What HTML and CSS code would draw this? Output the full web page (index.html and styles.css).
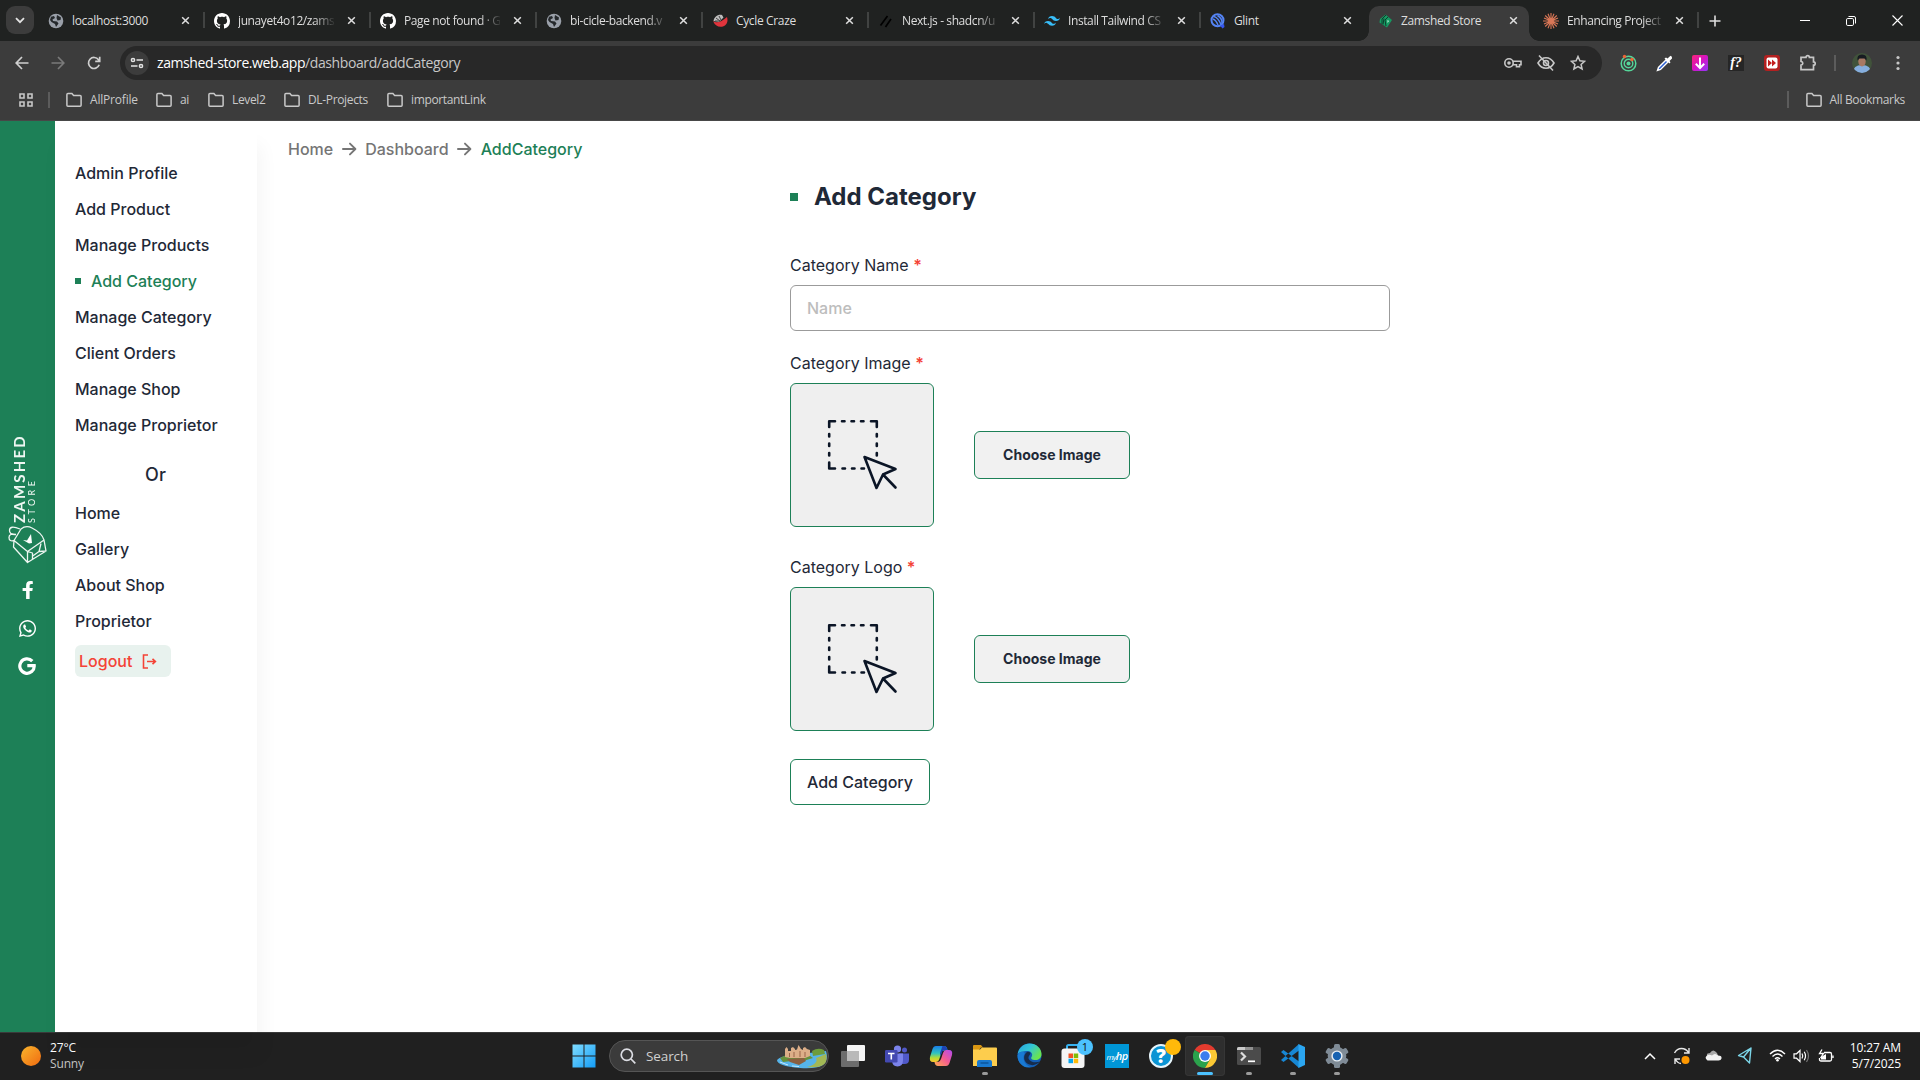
FILE: index.html
```html
<!DOCTYPE html>
<html lang="en">
<head>
<meta charset="utf-8">
<title>Zamshed Store</title>
<link rel="stylesheet" href="styles.css">
</head>
<body>
<svg class="defs" width="0" height="0" aria-hidden="true">
  <defs>
    <symbol id="x" viewBox="0 0 10 10"><path d="M1.3 1.3l7.4 7.4M8.7 1.3L1.3 8.7" stroke="currentColor" stroke-width="1.7" fill="none"/></symbol>
    <symbol id="folder" viewBox="0 0 16 16"><path d="M.9 2.6q0-1 1-1h4l1.7 2h6.5q1 0 1 1v8.600q0 1-1 1H1.900q-1 0-1-1z" fill="none" stroke="currentColor" stroke-width="1.500"/></symbol>
    <symbol id="globe" viewBox="0 0 16 16"><circle cx="8" cy="8" r="7.300" fill="#9aa0a9"/><path d="M3 3.800l3-.8 1 2-2.500 1.500L5 8l4 .5 1.500 2L8 14l-1-3-3.500-2L2 7zM9 2l4 2.500-.5 2.500-3 .5L8.500 5z" fill="#24282b"/></symbol>
    <symbol id="github" viewBox="0 0 16 16"><path fill="#fff" d="M8 0C3.580 0 0 3.580 0 8c0 3.540 2.290 6.530 5.470 7.590.4.070.55-.17.55-.38 0-.19-.01-.82-.01-1.490-2.010.37-2.530-.49-2.690-.94-.09-.23-.48-.94-.82-1.130-.28-.15-.68-.52-.01-.53.63-.01 1.080.58 1.230.82.72 1.210 1.870.87 2.330.66.07-.52.28-.87.51-1.070-1.780-.2-3.640-.89-3.640-3.950 0-.87.31-1.590.82-2.150-.08-.2-.36-1.020.08-2.120 0 0 .67-.21 2.200.82.64-.18 1.320-.27 2-.27s1.360.09 2 .27c1.530-1.040 2.200-.82 2.200-.82.44 1.100.16 1.920.08 2.120.51.56.82 1.270.82 2.150 0 3.070-1.870 3.750-3.650 3.950.29.25.54.73.54 1.480 0 1.070-.01 1.930-.01 2.200 0 .21.15.46.55.38A8.010 8.010 0 0016 8c0-4.420-3.580-8-8-8z"/></symbol>
    <symbol id="arrow" viewBox="0 0 16 14"><path d="M1 7h13M8.500 1.200L14.300 7l-5.800 5.800" fill="none" stroke="currentColor" stroke-width="2" stroke-linecap="round" stroke-linejoin="round"/></symbol>
    <symbol id="select" viewBox="0 0 72 72">
      <g fill="none" stroke="#0b1526" stroke-width="2.600" stroke-linecap="round" stroke-linejoin="round">
        <path d="M8 2.200H2.200V8M44 2.200h5.800V8M2.200 43.500v6H8"/>
        <path d="M15 2.200h2.500M24.500 2.200H27M34 2.200h2.500M2.200 15v2.500M2.200 24.500V27M2.200 34v2.500M49.800 15v2.500M49.800 24.500V27M49.800 34v2.500M15.500 49.500H18M25 49.500h2.500M34.500 49.500H37"/>
        <path d="M37.500 38L68.500 50l-12.500 5.500L49.500 69zM56 55.500L68.500 68.500"/>
      </g>
    </symbol>
  </defs>
</svg>

<header class="browser">
  <div class="tabstrip">
    <button class="tab-search"><svg width="10" height="7" viewBox="0 0 10 7"><path d="M1 1.200l4 4 4-4" fill="none" stroke="#e3e3e3" stroke-width="1.800"/></svg></button>
    <div class="tab"><svg class="fav"><use href="#globe"/></svg><span class="title">localhost:3000</span><svg class="close"><use href="#x"/></svg></div>
    <div class="tab"><svg class="fav"><use href="#github"/></svg><span class="title fade">junayet4o12/zams</span><svg class="close"><use href="#x"/></svg></div>
    <div class="tab"><svg class="fav"><use href="#github"/></svg><span class="title fade">Page not found · G</span><svg class="close"><use href="#x"/></svg></div>
    <div class="tab"><svg class="fav"><use href="#globe"/></svg><span class="title fade">bi-cicle-backend.v</span><svg class="close"><use href="#x"/></svg></div>
    <div class="tab"><svg class="fav" viewBox="0 0 16 16"><path d="M1 8q5 4 14-4 2 7-4 9.500Q4 15 1 8z" fill="#e0343c"/><path d="M1.500 8C2 4 6 1 10 2l1.500 2.500L7 9z" fill="#bdbdbd"/><path d="M4 5l4 3M7 3l2 4M3 8l5 0" stroke="#444"/></svg><span class="title">Cycle Craze</span><svg class="close"><use href="#x"/></svg></div>
    <div class="tab"><svg class="fav" viewBox="0 0 16 16"><path d="M2.500 12.500l7-9.500M7.500 14L13 6" stroke="#000" stroke-width="1.700"/></svg><span class="title fade">Next.js - shadcn/u</span><svg class="close"><use href="#x"/></svg></div>
    <div class="tab"><svg class="fav" viewBox="0 0 54 33"><path fill="#38bdf8" d="M27 0c-7.200 0-11.700 3.600-13.500 10.800 2.700-3.600 5.850-4.950 9.450-4.050 2.054.514 3.522 2.004 5.147 3.653C30.744 13.090 33.808 16.200 40.500 16.200c7.200 0 11.700-3.600 13.500-10.800-2.700 3.600-5.850 4.950-9.450 4.050-2.054-.514-3.522-2.004-5.147-3.653C36.756 3.110 33.692 0 27 0zM13.500 16.200C6.300 16.200 1.800 19.800 0 27c2.700-3.600 5.850-4.950 9.450-4.050 2.054.514 3.522 2.004 5.147 3.653C17.244 29.290 20.308 32.400 27 32.400c7.200 0 11.700-3.600 13.500-10.800-2.700 3.600-5.850 4.950-9.450 4.050-2.054-.514-3.522-2.004-5.147-3.653C23.256 19.310 20.192 16.200 13.500 16.200z"/></svg><span class="title fade">Install Tailwind CS</span><svg class="close"><use href="#x"/></svg></div>
    <div class="tab no-sep"><svg class="fav" viewBox="0 0 16 16"><circle cx="7.500" cy="7.300" r="6" fill="none" stroke="#5484f5" stroke-width="2"/><path d="M4 3.500q4 1 7 8M7.500 2.500q5 3 4.500 8M3 6q3 1 5 6" stroke="#5484f5" stroke-width="1.500" fill="none"/><path d="M10 12.500l4-1.500.5 3-2 1.500z" fill="#3656ee"/></svg><span class="title">Glint</span><svg class="close"><use href="#x"/></svg></div>
    <div class="tab active"><svg class="fav" viewBox="0 0 16 16"><path d="M7.500 1.500L14 7l-5 7.500L1.500 9.500 2 6z" fill="#169a62"/><path d="M8 2L4 6v5M6 5.500l-1 6M10 4L7 7l1 6" stroke="#0c3d2c" fill="none"/><path d="M9.500 7l1.500 1L9.500 10z" fill="#d5fbe8"/></svg><span class="title">Zamshed Store</span><svg class="close"><use href="#x"/></svg></div>
    <div class="tab"><svg class="fav" viewBox="0 0 16 16"><path d="M8 0v16M0 8h16M2.200 2.500l11.600 11M13.800 2.500l-11.600 11M5 .8l6 14.400M11 .8L5 15.200M1 5l14 6M15 5L1 11" stroke="#d97757" stroke-width="1.100"/></svg><span class="title fade">Enhancing Project</span><svg class="close"><use href="#x"/></svg></div>
    <button class="new-tab"><svg width="12" height="12" viewBox="0 0 12 12"><path d="M6 .5v11M.5 6h11" stroke="#dedede" stroke-width="1.600"/></svg></button>
    <div class="window-controls">
      <svg width="10" height="10"><path d="M0 4.500h10" stroke="#fff"/></svg>
      <svg width="10" height="10" viewBox="0 0 10 10" fill="none" stroke="#fff"><rect x=".5" y="2.500" width="7" height="7" rx="1.300"/><path d="M2.500.5H8q1.500 0 1.500 1.500v5.500"/></svg>
      <svg width="11" height="11"><path d="M.5.5l10 10M10.500.5l-10 10" stroke="#fff" stroke-width="1.100"/></svg>
    </div>
  </div>

  <div class="toolbar">
    <div class="nav">
      <svg width="14" height="14" viewBox="0 0 14 14" fill="none" stroke="#d0d0d0" stroke-width="1.700"><path d="M13.500 7H1.500M7 1L1.200 7 7 13"/></svg>
      <svg width="14" height="14" viewBox="0 0 14 14" fill="none" stroke="#7a7a7a" stroke-width="1.700"><path d="M.5 7h12M7 1l5.800 6L7 13"/></svg>
      <svg width="14" height="14" viewBox="0 0 14 14" fill="none" stroke="#d0d0d0" stroke-width="1.700"><path d="M12.200 8.800A5.500 5.500 0 1 1 11.500 3.800L12.500 5.200M12.700.8v4.600H8.200"/></svg>
    </div>
    <div class="omnibox">
      <span class="site-info"><svg width="14" height="12" viewBox="0 0 14 12" fill="none" stroke="#e3e3e3" stroke-width="1.500"><circle cx="3" cy="3" r="1.600"/><path d="M6.500 3H13M1 9h6.500"/><circle cx="11" cy="9" r="1.600"/></svg></span>
      <span class="url"><b>zamshed-store.web.app</b>/dashboard/addCategory</span>
      <div class="omni-actions">
        <svg width="18" height="12" viewBox="0 0 18 12" fill="none" stroke="#c7c7c7" stroke-width="1.600"><circle cx="5" cy="6" r="4.200"/><circle cx="5" cy="6" r="1" fill="#c7c7c7"/><path d="M9 4.300h8v3.400h-1.500v2h-3v-2H9"/></svg>
        <svg width="18" height="18" viewBox="0 0 18 18" fill="none" stroke="#c7c7c7" stroke-width="1.600"><path d="M1 9q3-5.300 8-5.300T17 9q-3 5.300-8 5.300T1 9z"/><circle cx="9" cy="9" r="2.500"/><path d="M2 1.500l14 15"/></svg>
        <svg width="16" height="16" viewBox="0 0 16 16" fill="none" stroke="#c7c7c7" stroke-width="1.500"><path d="M8 1.500l1.900 4.300 4.700.5-3.500 3.100 1 4.600L8 11.600 3.900 14l1-4.600L1.400 6.300l4.700-.5z"/></svg>
      </div>
    </div>
    <div class="extensions">
      <svg width="17" height="18" viewBox="0 0 17 18"><circle cx="8.500" cy="9.500" r="7.300" fill="none" stroke="#55d69a" stroke-width="1.500"/><circle cx="8.500" cy="9.500" r="4.300" fill="none" stroke="#55d69a" stroke-width="1.400"/><circle cx="8.500" cy="9.500" r="2" fill="#55d69a"/><circle cx="4.500" cy="2.500" r="1.700" fill="#ee6336"/><circle cx="12" cy="5.500" r="1.700" fill="#ee6336"/></svg>
      <svg width="17" height="17" viewBox="0 0 17 17"><path d="M10 5L2.500 12.500 1.500 15.500l3-1L12 7z" fill="#2c5fd0" stroke="#fff" stroke-width="1.400"/><path d="M8.500 3.500l5 5 1-1.200-1-1.300 2.500-2.500Q16.500 1.500 14.500.8L11.500 3.500l-1.500-1z" fill="#fff"/></svg>
      <svg width="16" height="16" viewBox="0 0 16 16"><defs><linearGradient id="pk" x1="0" y1="0" x2="1" y2="1"><stop stop-color="#fb2478"/><stop offset=".5" stop-color="#d315c4"/><stop offset="1" stop-color="#9038fb"/></linearGradient></defs><rect width="16" height="16" rx="2" fill="url(#pk)"/><path d="M8 2.500v10.500M3.800 8.800L8 13l4.200-4.200" stroke="#fff" stroke-width="2" fill="none"/></svg>
      <span class="ext-font">f?</span>
      <svg width="16" height="16" viewBox="0 0 16 16"><rect width="16" height="16" rx="3" fill="#b32020"/><rect x="2.500" y="2.500" width="11" height="11" rx="2" fill="#fff"/><path d="M4 4.500L8 8l-4 3.500zM8 4.500L12 8l-4 3.500z" fill="#c41d1d"/></svg>
      <svg width="18" height="18" viewBox="0 0 18 18" fill="none" stroke="#c7c7c7" stroke-width="1.700"><path d="M2 3.300h5a1.700 1.700 0 0 1 3.400 0h4.100v4.500a1.700 1.700 0 0 1 0 3.400v4.500H2v-4.500q1.800-.3 1.800-1.900T2 7.400z"/></svg>
      <i class="vline"></i>
      <svg width="20" height="20" viewBox="0 0 20 20"><defs><clipPath id="av"><circle cx="10" cy="10" r="10"/></clipPath></defs><g clip-path="url(#av)"><rect width="20" height="20" fill="#41533b"/><path d="M1 20q0-8 9-8t9 8z" fill="#86aede"/><ellipse cx="10" cy="8.500" rx="3.700" ry="5" fill="#a87964"/><path d="M5.500 7.500q-1-6 4.500-6t4.500 6l-2-2H7.500z" fill="#171b21"/></g></svg>
      <svg width="4" height="16" viewBox="0 0 4 16" fill="#c7c7c7"><circle cx="2" cy="2.500" r="1.600"/><circle cx="2" cy="8" r="1.600"/><circle cx="2" cy="13.500" r="1.600"/></svg>
    </div>
  </div>

  <div class="bookmarks">
    <svg class="apps" width="14" height="14" viewBox="0 0 14 14" fill="none" stroke="#c7c7c7" stroke-width="1.600"><path d="M1 1h4v4H1zM9 1h4v4H9zM1 9h4v4H1zM9 9h4v4H9z"/></svg>
    <i class="vline"></i>
    <span class="bm bm-1"><svg><use href="#folder"/></svg>AllProfile</span>
    <span class="bm bm-2"><svg><use href="#folder"/></svg>ai</span>
    <span class="bm bm-3"><svg><use href="#folder"/></svg>Level2</span>
    <span class="bm bm-4"><svg><use href="#folder"/></svg>DL-Projects</span>
    <span class="bm bm-5"><svg><use href="#folder"/></svg>importantLink</span>
    <span class="bm all"><svg><use href="#folder"/></svg>All Bookmarks</span>
  </div>
</header>

<main class="page">
  <div class="rail">
    <div class="brand">
      <div class="brand-text"><strong>ZAMSHED</strong><span>STORE</span></div>
      <svg width="40" height="40" viewBox="0 0 40 40" fill="none" stroke="#eef6f2" stroke-width="1.300" stroke-linejoin="round"><path d="M6 15.500L13 4q5-4 11-1 10 5 12 12L19.500 26.500zM6 15.500l-.5 6.500L19.500 37.500V26.500M19.500 37.500L38 26l-2-11M24 31.500l7-5 7-.5M31 26.500l2-8M19.500 26.500l5 1.500v6"/><path d="M12 4Q2 0 1.500 5T8 9.500M8 9.500Q1 8 1 12.500t5.500 3"/><path d="M15 15l4 .5L23 9l1 9-3 .500z" fill="#fff" stroke="none"/></svg>
    </div>
    <svg width="11" height="18" viewBox="0 0 11 18" fill="#fff"><path d="M10.300 10.100l.5-3.200H7.600V4.800c0-.9.4-1.700 1.800-1.700h1.400V.3S9.500.1 8.300.1C5.700.1 4.100 1.600 4.100 4.400v2.500H.6v3.200h3.500V18h3.500v-7.900z"/></svg>
    <svg width="17" height="17" viewBox="0 32 448 448" fill="#fff"><path d="M380.900 97.100C339 55.100 283.200 32 223.900 32c-122.400 0-222 99.600-222 222 0 39.100 10.200 77.300 29.600 111L0 480l117.700-30.900c32.400 17.700 68.900 27 106.100 27h.1c122.300 0 224.100-99.600 224.100-222 0-59.300-25.200-115-67.100-157zm-157 341.600c-33.200 0-65.700-8.900-94-25.700l-6.700-4-69.800 18.300L72 359.200l-4.400-7c-18.500-29.400-28.200-63.300-28.200-98.200 0-101.700 82.800-184.500 184.600-184.500 49.300 0 95.600 19.200 130.400 54.100 34.800 34.900 56.200 81.200 56.100 130.500 0 101.800-84.900 184.600-186.600 184.600zm101.200-138.200c-5.500-2.800-32.800-16.200-37.900-18-5.100-1.900-8.800-2.800-12.500 2.800-3.700 5.600-14.300 18-17.600 21.800-3.200 3.700-6.500 4.200-12 1.400-32.600-16.300-54-29.100-75.500-66-5.700-9.800 5.700-9.100 16.300-30.300 1.800-3.700.9-6.900-.5-9.700-1.400-2.800-12.500-30.100-17.100-41.200-4.500-10.800-9.100-9.300-12.500-9.500-3.200-.2-6.900-.2-10.600-.2-3.700 0-9.700 1.400-14.800 6.900-5.100 5.600-19.400 19-19.400 46.300 0 27.300 19.900 53.700 22.600 57.400 2.800 3.700 39.100 59.700 94.800 83.800 35.200 15.200 49 16.500 66.600 13.900 10.700-1.600 32.800-13.400 37.400-26.400 4.600-13 4.600-24.100 3.200-26.400-1.300-2.500-5-3.900-10.500-6.600z"/></svg>
    <svg width="18" height="18" viewBox="0 0 18 18" fill="none" stroke="#fff" stroke-width="3.200"><path d="M14.300 4.200A7.200 7.200 0 1 0 16.200 8.600H9.300"/></svg>
  </div>

  <aside class="sidebar">
    <nav>
      <a>Admin Profile</a>
      <a>Add Product</a>
      <a>Manage Products</a>
      <a class="current">Add Category</a>
      <a>Manage Category</a>
      <a>Client Orders</a>
      <a>Manage Shop</a>
      <a>Manage Proprietor</a>
    </nav>
    <div class="or">Or</div>
    <nav>
      <a>Home</a>
      <a>Gallery</a>
      <a>About Shop</a>
      <a>Proprietor</a>
    </nav>
    <button class="logout">Logout <svg width="15" height="15" viewBox="0 0 15 15" fill="none" stroke="currentColor" stroke-width="1.600"><path d="M6 1H1.500v13H6M5 7.500h8.500M10.500 4.800l2.900 2.700-2.900 2.700"/></svg></button>
  </aside>

  <section class="content">
    <div class="crumbs"><span>Home</span><svg><use href="#arrow"/></svg><span>Dashboard</span><svg><use href="#arrow"/></svg><span class="here">AddCategory</span></div>
    <form class="form">
      <h1>Add Category</h1>
      <label>Category Name <em>*</em></label>
      <input type="text" placeholder="Name">
      <label>Category Image <em>*</em></label>
      <div class="picker"><div class="preview"><svg><use href="#select"/></svg></div><button type="button" class="choose">Choose Image</button></div>
      <label>Category Logo <em>*</em></label>
      <div class="picker"><div class="preview"><svg><use href="#select"/></svg></div><button type="button" class="choose">Choose Image</button></div>
      <button type="button" class="submit">Add Category</button>
    </form>
  </section>
</main>

<footer class="taskbar">
  <div class="weather"><i class="sun"></i><div><p>27°C</p><p class="dim">Sunny</p></div></div>
  <div class="dock">
    <span class="app"><svg width="24" height="24" viewBox="0 0 24 24"><defs><linearGradient id="win" x1="0" y1="0" x2="1" y2="1"><stop stop-color="#7fdcff"/><stop offset="1" stop-color="#139df7"/></linearGradient></defs><path fill="url(#win)" d="M.5.500h11v11H.5zM12.500.500h11v11h-11zM.5 12.500h11v11H.5zM12.500 12.500h11v11h-11z"/></svg></span>
    <div class="search"><svg width="16" height="16" viewBox="0 0 16 16" fill="none" stroke="#dcdde3" stroke-width="1.700"><circle cx="6.800" cy="6.800" r="5.600"/><path d="M11 11l4.300 4.300"/></svg><span>Search</span>
      <svg class="castle" width="50" height="24" viewBox="0 0 50 24"><path d="M0 15q3-4 16-5l16-2 17-2q3 10-4 14.500-6 3.500-22 2.500Q0 21 0 15z" fill="#56b4ea"/><path d="M35 6q6-4 12-1l1 4-12 2z" fill="#6d9c3c"/><path d="M30 22q12-3 9-9l10-4q2 8-3 11-5 3-16 2z" fill="#a3b855"/><path d="M3 13l6-3 17 2 6-2 4 3-13 4-8-1-9 1z" fill="#66913c"/><path d="M10 14l17-1 2 3-7 4-9-3z" fill="#8a5f40"/><path d="M8 12V4l1.500-2L11 4v2h3V3l2-1 2 2v1l2-.5L21.500 0 24 4l2 1V3l2-1 2 2 3 1v6l-5 2H13z" fill="#dcae88"/><path d="M12.500 8v4M17 7v5M23 6v6M28 7v5" stroke="#9a6548"/><path d="M3 17l8 3M15 21l7 .5" stroke="#c4eaff"/></svg>
    </div>
    <span class="app"><svg width="24" height="22" viewBox="0 0 24 22"><rect x="6" width="18" height="16" rx="1" fill="#f5f5f5"/><rect y="6" width="18" height="16" rx="1" fill="#6d6d6d"/><path d="M6 6h12v10H6z" fill="#b9b9b9"/></svg></span>
    <span class="app"><svg width="24" height="22" viewBox="0 0 24 22"><circle cx="19.500" cy="5" r="2.500" fill="#5058c7"/><circle cx="12.500" cy="4" r="3.600" fill="#7b83eb"/><path d="M14 8.500h10V15q0 4-4.500 4H15z" fill="#5059c9"/><path d="M7 8.500h11V15q0 6.500-5.500 6.500T7 15z" fill="#7b83eb"/><rect y="5" width="12.500" height="12.500" rx="1.200" fill="#4349b1"/><path d="M3 8.500h6.500M6.300 8.500v6" stroke="#fff" stroke-width="1.600"/></svg></span>
    <span class="app"><svg width="24" height="22" viewBox="0 0 24 22"><defs><linearGradient id="c1" x1="0" y1="0" x2="0" y2="1"><stop stop-color="#1a7de8"/><stop offset=".45" stop-color="#2fc4c0"/><stop offset=".75" stop-color="#b7dd32"/><stop offset="1" stop-color="#ffc42c"/></linearGradient><linearGradient id="c2" x1="1" y1="0" x2="0" y2="1"><stop stop-color="#b14af0"/><stop offset=".5" stop-color="#f55c90"/><stop offset="1" stop-color="#ffae4e"/></linearGradient></defs><path d="M7 1h8q3 0 3.500 4L13 6l-3 9q-1 2-3 2H4q-4 0-3-5l2.500-8Q4.500 1 7 1z" fill="url(#c1)"/><path d="M17 21H9q-3 0-3.500-4H9q2 0 3-3l2-6q1-3 3-3h3q4 0 3 5l-2.500 8Q19.500 21 17 21z" fill="url(#c2)"/><path d="M13.500 1H16q2 1 2.500 4h-3q-1.500 0-2.500 2l-1.500 4L11 8z" fill="#1d43b4"/></svg></span>
    <span class="app run"><svg width="24" height="22" viewBox="0 0 24 22"><path d="M0 1q0-1 1-1h7l2 2.500H8L6 5H0z" fill="#d99612"/><path d="M0 4.500h7l2-2h14q1 0 1 1V21H0z" fill="#fdcd4d"/><path d="M4 22v-5q0-2 2-2h11q2 0 2 2v5z" fill="#1979cf"/><path d="M7.500 18h8" stroke="#0c4f93" stroke-width="1.300"/></svg></span>
    <span class="app"><svg width="25" height="25" viewBox="0 0 25 25"><defs><linearGradient id="e1" x1="0" y1="0" x2="1" y2=".6"><stop stop-color="#28a3dc"/><stop offset=".5" stop-color="#32c5d7"/><stop offset="1" stop-color="#6be54c"/></linearGradient></defs><circle cx="12.500" cy="12.500" r="12" fill="#135fb5"/><path d="M.6 11.500C2 4 7 .5 12.500.5c7 0 12 5 12 10.500 0 4-3 6-6 6-4 0-5-1.500-4-3 2-3-.5-6-4-6S1 9 .6 11.500z" fill="url(#e1)"/><path d="M10 9c-4 3-4 9 1 12 5 2.500 9 .5 12-2.500-3 1-8 1.500-10.500-1.500C10 14 13 12 13.500 10.500 13 9 12 8.500 10 9z" fill="#172c4b"/><path d="M8 10c-3 4-1.500 12 6 14C6 26 0 19 .6 12 2 9 5 7.500 8 10z" fill="#197ad4"/></svg></span>
    <span class="app store"><svg width="24" height="24" viewBox="0 0 24 24"><path d="M6 6V2.500Q6 1 7.500 1h9Q18 1 18 2.500V6" fill="none" stroke="#36b2f1" stroke-width="2"/><rect x=".5" y="4.500" width="23" height="19.500" rx="3" fill="#f5f5f5"/><path d="M7.500 9.500H12V14H7.500z" fill="#f35325"/><path d="M12.700 9.500h4.500V14h-4.500z" fill="#81bc06"/><path d="M7.500 14.700H12v4.500H7.500z" fill="#05a6f0"/><path d="M12.700 14.700h4.500v4.500h-4.500z" fill="#ffba08"/></svg><b class="badge blue">1</b></span>
    <span class="app"><span class="hp">my<b>hp</b></span></span>
    <span class="app"><span class="help">?</span><b class="badge amber"></b></span>
    <span class="app run focus"><svg width="24" height="24" viewBox="0 0 24 24"><path d="M12 12L1.600 6A12 12 0 0 1 22.400 6z" fill="#e33b2e"/><path d="M12 12L1.600 6A12 12 0 0 0 12 24l5.200-9z" fill="#2ba24c"/><path d="M12 6h10.400A12 12 0 0 1 12 24l5.200-9z" fill="#fcc934"/><circle cx="12" cy="12" r="6" fill="#fff"/><circle cx="12" cy="12" r="4.700" fill="#3b7ded"/></svg></span>
    <span class="app run"><svg width="24" height="18" viewBox="0 0 24 18"><rect width="24" height="18" rx="1.500" fill="#4b4b4b"/><path d="M0 1.500Q0 0 1.500 0H16v3H0z" fill="#c9c9c9"/><path d="M8 0h8v3H8z" fill="#919191"/><path d="M4 5.500l4 4-4 4" stroke="#ddd" stroke-width="2.200" fill="none"/><path d="M11 14.300h7" stroke="#fff" stroke-width="1.700"/></svg></span>
    <span class="app run"><svg width="24" height="24" viewBox="0 0 24 24"><path d="M0 8l2.500-2L18 17.500V24zM0 16l2.500 2L18 6.500V0z" fill="#1787d4"/><path d="M17.500 0L24 3v18l-6.500 3z" fill="#2ba6f1"/></svg></span>
    <span class="app run"><svg width="24" height="24" viewBox="0 0 24 24"><g fill="#7f8b96"><rect x="9" width="6" height="24" rx="1.500"/><rect x="9" width="6" height="24" rx="1.500" transform="rotate(60 12 12)"/><rect x="9" width="6" height="24" rx="1.500" transform="rotate(120 12 12)"/><circle cx="12" cy="12" r="9.300"/></g><circle cx="12" cy="12" r="5.600" fill="#e8eef3"/><circle cx="12" cy="12" r="4.200" fill="#1762b1"/></svg></span>
  </div>
  <div class="tray">
    <svg width="12" height="8" viewBox="0 0 12 8" fill="none" stroke="#fff" stroke-width="1.500"><path d="M1 7l5-5 5 5"/></svg>
    <svg width="18" height="18" viewBox="0 0 18 18" fill="none" stroke="#e8e8e8" stroke-width="1.400"><path d="M1.500 6Q4 1.500 8.500 1.500t7 4M16 1v5h-5M2 17v-5h5M2.500 12.500Q5 16.500 8 16.500"/><circle cx="12.500" cy="13" r="4" fill="#ff9800" stroke="none"/></svg>
    <svg width="17" height="11" viewBox="0 0 17 11"><path d="M3 8Q0 3 5 3q3-5 7 0l2 5z" fill="#a8a8a8"/><path d="M2.500 10.500Q-1 8 2 5.500q2-1.500 5 0 3-3 6 0 4 0 3.500 3-.5 2-3 2z" fill="#f2f2f2"/></svg>
    <svg width="16" height="17" viewBox="0 0 16 17" fill="none" stroke="#7cd5e8" stroke-width="1.400" stroke-linejoin="round"><path d="M14 1L1.500 8.500l5 1.500 6 6zM6.500 10L14 1"/></svg>
    <svg width="17" height="13" viewBox="0 0 17 13" fill="none" stroke="#fff" stroke-width="1.400"><path d="M1 5q7.500-7.500 15 0M3.500 7.500q5-5 10 0M6 10q2.500-2.500 5 0"/><circle cx="8.500" cy="11.300" r="1.300" fill="#fff" stroke="none"/></svg>
    <svg width="17" height="14" viewBox="0 0 17 14" fill="none" stroke="#fff" stroke-width="1.200"><path d="M1 4.800h2.500L7 1.500v11L3.500 9.200H1zM9 4.500q1.500 2.500 0 5M11.200 2.800q2.700 4.200 0 8.400"/><path d="M13.500 1q4 6 0 12" stroke="#777"/></svg>
    <svg width="17" height="14" viewBox="0 0 17 14" fill="none" stroke="#fff" stroke-width="1.300"><path d="M7 3.500h6q1.500 0 1.500 1.500v5.500Q14.500 12 13 12H4q-1.500 0-1.500-1.500V9M16 6.500V9"/><path d="M4 10.500V8l5-3v5.500z" fill="#fff" stroke="none"/><path d="M5 .5L2.500 4.500h4L3.500 9" /></svg>
    <div class="clock"><p>10:27 AM</p><p>5/7/2025</p></div>
  </div>
</footer>
</body>
</html>
```
FILE: styles.css
```css
* { box-sizing: border-box; }
body {
  margin: 0;
  width: 1920px;
  height: 1080px;
  overflow: hidden;
  display: flex;
  flex-direction: column;
  background: #fff;
  font-family: Inter, "Liberation Sans", sans-serif;
}
p { margin: 0; }
svg { display: block; flex: none; }
button { font: inherit; border: 0; padding: 0; background: none; }
.defs { position: absolute; }

/* Browser window */
.browser {
  height: 121px;
  flex: none;
  background: #3c3c3c;
  border-bottom: 1px solid #474747;
  color: #dedede;
  font-family: "Open Sans", "Noto Sans", sans-serif;
  font-size: 12px;
}
.tabstrip { display: flex; height: 41px; background: #202221; }
.tab-search {
  width: 28px;
  height: 28px;
  margin: 6px 4px 0 6px;
  border-radius: 9px;
  background: #3c3c3c;
  display: flex;
  align-items: center;
  justify-content: center;
}
.tab {
  position: relative;
  width: 166px;
  flex: none;
  display: flex;
  align-items: center;
  padding-left: 10px;
}
.tab::after {
  content: "";
  position: absolute;
  right: -1px;
  top: 12px;
  width: 2px;
  height: 16px;
  background: #414342;
}
.tab.no-sep::after { display: none; }
.fav { width: 16px; height: 16px; }
.title {
  margin-left: 8px;
  width: 101px;
  white-space: nowrap;
  letter-spacing: -.35px;
}
.fade {
  letter-spacing: -.4px;
  -webkit-mask-image: linear-gradient(90deg, #000 76px, transparent 98px);
  mask-image: linear-gradient(90deg, #000 76px, transparent 98px);
}
.close { width: 9px; height: 9px; margin-left: 8px; }
.tab.active { padding-left: 12px; }
.tab.active .title { width: 100px; margin-left: 7px; }
.tab.active .fav, .tab.active .title, .tab.active .close { z-index: 1; }
.tab.active::before {
  content: "";
  position: absolute;
  inset: 6px 3px 0;
  border-radius: 10px 10px 0 0;
  background: #3c3c3c;
}
.tab.active::after {
  right: auto;
  left: -7px;
  top: 31px;
  width: 180px;
  height: 10px;
  background:
    radial-gradient(circle at 0 0, transparent 9.500px, #3c3c3c 10px) 0 0 / 10px 10px no-repeat,
    radial-gradient(circle at 100% 0, transparent 9.500px, #3c3c3c 10px) 100% 0 / 10px 10px no-repeat;
}
.tab.active + .tab { padding-left: 11px; }
.tab.active + .tab .close { margin-left: 7px; }
.new-tab { width: 34px; display: flex; align-items: center; justify-content: center; }
.window-controls { margin-left: auto; padding-right: 17px; display: flex; align-items: center; gap: 36px; }

.toolbar { display: flex; align-items: center; height: 44px; }
.nav { display: flex; gap: 22px; padding-left: 15px; width: 120px; }
.omnibox {
  width: 1482px;
  height: 34px;
  border-radius: 17px;
  background: #282828;
  display: flex;
  align-items: center;
  padding: 0 16px 0 5px;
}
.site-info {
  width: 24px;
  height: 24px;
  border-radius: 50%;
  background: #3c3c3c;
  display: flex;
  align-items: center;
  justify-content: center;
}
.url { margin: -1px 0 0 8px; font-size: 14px; letter-spacing: -.41px; color: #c7c7c7; }
.url b { font-weight: 400; color: #fff; }
.omni-actions { margin-left: auto; display: flex; align-items: center; gap: 15px; }
.extensions {
  display: grid;
  grid-template-columns: repeat(6, 36px) 17px 38px 34px;
  align-items: center;
  justify-items: center;
  padding-left: 8px;
}
.ext-font {
  width: 16px;
  height: 16px;
  background: #262626;
  color: #fff;
  font: italic bold 14px/15px "Liberation Serif", serif;
  text-align: center;
}
.vline { width: 2px; height: 16px; background: #5c5c5c; }
.bookmarks { display: flex; align-items: center; height: 30px; padding: 0 15px 1px 19px; font-size: 12px; color: #c9c9c9; letter-spacing: -.35px; }
.bookmarks .vline { margin: 0 16px 0 15px; }
.bm { display: flex; align-items: center; gap: 8px; white-space: nowrap; }
.bm svg { width: 16px; height: 16px; }
.bm-1 { width: 90px; letter-spacing: -.2px; }
.bm-2 { width: 52px; }
.bm-3 { width: 76px; }
.bm-4 { width: 103px; }
.all { margin-left: auto; padding-left: 17px; border-left: 2px solid #5c5c5c; }

/* Application page */
.page { flex: 1; display: flex; background: #fff; color: #1f2937; font-size: 16px; }
.rail {
  width: 55px;
  background: #1d8057;
  display: flex;
  flex-direction: column;
  align-items: center;
  padding: 314px 1px 0 0;
  gap: 20.500px;
}
.brand { display: flex; flex-direction: column; gap: 2px; height: 125.500px; width: 38px; }
.brand-text {
  writing-mode: vertical-rl;
  transform: rotate(180deg);
  height: 88px;
  flex: none;
  width: 26px;
  margin-left: 4px;
  display: flex;
  flex-direction: column;
  gap: 1px;
  color: #eef6f2;
  font-family: Lato, sans-serif;
  line-height: 1;
}
.brand-text strong { width: 14px; font-size: 15px; letter-spacing: 2.200px; line-height: 14px; }
.brand-text span { width: 10px; font-size: 9px; letter-spacing: 3.500px; line-height: 10px; }
.sidebar {
  width: 202px;
  padding: 40px 20px 0;
  background: #fff;
  box-shadow: 4px 24px 18px rgba(0, 0, 0, .045);
  font-weight: 500;
  z-index: 1;
  color: #1f2937;
}
.sidebar nav { display: flex; flex-direction: column; gap: 12px; white-space: nowrap; }
.sidebar a { height: 24px; line-height: 24px; }
.current { display: flex; align-items: center; gap: 10px; color: #1d8057; }
.current::before { content: ""; width: 6px; height: 6px; background: #1d8057; }
.or { height: 64px; padding: 24px 1px 0 0; text-align: center; font-size: 18px; line-height: 28px; }
.logout {
  width: 96px;
  height: 32px;
  margin-top: 12px;
  padding-left: 4px;
  border-radius: 6px;
  background: #e8f2ee;
  color: #f44336;
  display: flex;
  align-items: center;
  gap: 10px;
}
.content { flex: 1; padding: 16px 31px; }
.crumbs { display: flex; align-items: center; gap: 8.500px; height: 24px; color: #757575; font-weight: 500; }
.crumbs svg { width: 15px; height: 14px; }
.crumbs .here { color: #1d8057; }
.form { width: 600px; margin: 20px 0 0 502px; display: flex; flex-direction: column; align-items: flex-start; }
.form h1 { margin: 0 0 40px; font-size: 24px; line-height: 32px; font-weight: 700; display: flex; align-items: center; gap: 16px; }
.form h1::before { content: ""; width: 8px; height: 8px; background: #1d8057; }
.form label { line-height: 24px; height: 32px; }
.form em { color: #f44336; font-style: normal; font-weight: 600; }
.form input {
  width: 600px;
  height: 46px;
  margin-bottom: 20px;
  padding: 0 16px;
  border: 1px solid #9b9b9b;
  border-radius: 6px;
  font: 500 16px Inter, sans-serif;
}
.form input::placeholder { color: #bdbdbd; opacity: 1; }
.picker { display: flex; align-items: center; gap: 40px; margin-bottom: 28px; }
.preview { width: 144px; height: 144px; border: 1px solid #1d8057; border-radius: 6px; background: #efefef; padding: 35px 0 0 36px; }
.preview svg { width: 72px; height: 72px; }
.choose { width: 156px; height: 48px; padding-bottom: 1px; border: 1px solid #1d8057; border-radius: 6px; background: #f1f1f1; color: #1f2937; font-size: 14px; font-weight: 700; }
.submit { width: 140px; height: 46px; border: 1px solid #1d8057; border-radius: 6px; color: #1f2937; font-weight: 500; }

/* Windows taskbar */
.taskbar {
  height: 48px;
  flex: none;
  display: grid;
  grid-template-columns: 562px 1fr 280px;
  align-items: center;
  padding-bottom: 2px;
  background: #202020;
  border-top: 1px solid #3a3a3a;
  color: #fff;
  font-family: "Open Sans", "Noto Sans", sans-serif;
  font-size: 12px;
  line-height: 16px;
}
.weather { display: flex; align-items: center; gap: 9px; padding-left: 21px; letter-spacing: -.15px; }
.sun { width: 20px; height: 20px; border-radius: 50%; background: linear-gradient(135deg, #f9b62d, #f06a10); }
.dim { color: #c4c4c4; }
.dock { display: flex; align-items: center; }
.app { position: relative; width: 44px; height: 40px; display: flex; align-items: center; justify-content: center; }
.app.run::after { content: ""; position: absolute; bottom: 1px; width: 6px; height: 3px; border-radius: 2px; background: #9a9a9a; }
.app.focus { width: 40px; margin: 0 2px; border-radius: 4px; background: #2e2e2e; box-shadow: inset 0 0 0 1px #363636; }
.app.focus::after { width: 16px; background: #4cc2ff; }
.search {
  width: 220px;
  height: 32px;
  margin: 0 2px 0 3px;
  padding: 0 1px 0 10px;
  border: 1px solid #555;
  border-radius: 16px;
  background: #3b3b3b;
  display: flex;
  align-items: center;
  gap: 10px;
  font-size: 13.500px;
  letter-spacing: -.1px;
  color: #d0d0d0;
}
.castle { margin: 2px 0 0 auto; }
.badge { position: absolute; right: 2px; top: 3px; width: 16px; height: 16px; border-radius: 50%; font-size: 11px; font-weight: 400; text-align: center; }
.blue { background: #4cc2ff; color: #111; }
.amber { background: #ffb90a; }
.hp { width: 24px; height: 24px; background: #0096d6; font: italic 8px/23px "Open Sans", sans-serif; letter-spacing: -.6px; text-align: center; }
.hp b { font-size: 11px; font-weight: 600; }
.help { width: 24px; height: 24px; border: 2px solid #e7f5fb; border-radius: 50%; background: #0a94d4; font: 800 19px/20px "Open Sans", sans-serif; text-align: center; }
.tray { display: flex; align-items: center; height: 45px; padding: 0 19px 0 4px; }
.tray svg:nth-child(2) { margin-left: 17px; }
.tray svg:nth-child(3) { margin-left: 14px; }
.tray svg:nth-child(4) { margin-left: 15px; }
.tray svg:nth-child(5) { margin-left: 16px; }
.tray svg:nth-child(6) { margin-left: 7px; }
.tray svg:nth-child(7) { margin-left: 7px; }
.clock { margin-left: auto; text-align: right; white-space: nowrap; letter-spacing: -.1px; }
```
